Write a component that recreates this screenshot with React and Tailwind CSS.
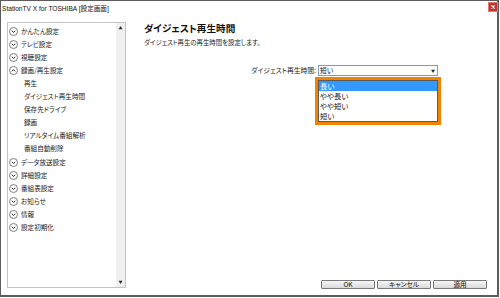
import React from "react";

const jp = "font-['Noto_Sans_CJK_JP','Noto_Sans',sans-serif] [font-feature-settings:'palt']";

function Chevron({ up }) {
    return (
        <svg width="9" height="9" viewBox="0 0 9 9" className="shrink-0">
            <circle cx="4.5" cy="4.5" r="4" fill="white" stroke="#6e6e6e" strokeWidth="0.9" />
            {up ? (
                <path d="M2.8 5.3 L4.5 3.6 L6.2 5.3" fill="none" stroke="#222" strokeWidth="1" />
            ) : (
                <path d="M2.8 3.8 L4.5 5.5 L6.2 3.8" fill="none" stroke="#222" strokeWidth="1" />
            )}
        </svg>
    );
}

const tree = [
    { label: "かんたん設定" },
    { label: "テレビ設定" },
    { label: "視聴設定" },
    { label: "録画/再生設定", open: true },
    { label: "再生", sub: true },
    { label: "ダイジェスト再生時間", sub: true },
    { label: "保存先ドライブ", sub: true },
    { label: "録画", sub: true },
    { label: "リアルタイム番組解析", sub: true },
    { label: "番組自動削除", sub: true },
    { label: "データ放送設定" },
    { label: "詳細設定" },
    { label: "番組表設定" },
    { label: "お知らせ" },
    { label: "情報" },
    { label: "設定初期化" },
];

const options = ["長い", "やや長い", "やや短い", "短い"];

export default function App() {
    return (
        <div className="w-[500px] h-[298px] bg-white overflow-hidden">
            <div className="relative w-[499px] h-[297px] border-t border-l border-r-2 border-b-2 border-[#5c5c5c] flex flex-col">
                {/* title bar */}
                <div className="h-[21px] shrink-0 relative">
                    <div className="pl-[1px] h-[15px] flex items-center text-[6.6px] text-[#111] font-['Liberation_Sans','Noto_Sans_CJK_JP',sans-serif]">
                        StationTV X for TOSHIBA [設定画面]
                    </div>
                    <div className="absolute left-[487px] top-[1px] w-[10px] h-[10px] bg-[#c4322c] border border-[#e07a74] flex items-center justify-center">
                        <svg width="4" height="4" viewBox="0 0 4 4">
                            <path d="M0.3 0.3 L3.7 3.7 M3.7 0.3 L0.3 3.7" stroke="white" strokeWidth="1.1" />
                        </svg>
                    </div>
                </div>

                <div className="flex-1 flex">
                    {/* left tree */}
                    <div className={`ml-[6px] w-[119px] h-[266px] border border-[#c4c4c4] flex ${jp}`}>
                        <div className="flex-1 pt-[2px]">
                            {tree.map((t) => (
                                <div
                                    key={t.label}
                                    className={`h-[13.1px] flex items-center text-[6.6px] text-[#1a1a1a] ${t.sub ? "pl-[16px]" : "pl-[1px] gap-[3px]"}`}
                                >
                                    {!t.sub && <Chevron up={t.open} />}
                                    <span>{t.label}</span>
                                </div>
                            ))}
                        </div>
                        <div className="w-[9px] bg-[#f0f0f0] flex flex-col justify-between items-center py-[3px]">
                            <span className="text-[4px] leading-[4px] text-[#222]">▲</span>
                            <span className="text-[4px] leading-[4px] text-[#222]">▼</span>
                        </div>
                    </div>

                    {/* right content */}
                    <div className={`flex-1 flex flex-col pl-[18px] ${jp}`}>
                        <div className="h-[12px] leading-[12px] text-[9.6px] font-bold text-[#111]">
                            ダイジェスト再生時間
                        </div>
                        <div className="mt-[5px] h-[8px] leading-[8px] text-[6.4px] text-[#222]">
                            ダイジェスト再生の再生時間を設定します。
                        </div>

                        <div className="mt-[18px] mr-[59px] flex justify-end items-center gap-[2px]">
                            <span className="text-[6.8px] text-[#222]">ダイジェスト再生時間:</span>
                            <div className="relative w-[120px] h-[11px] border border-[#7d9bbf] bg-white flex items-center">
                                <span className="pl-[1px] text-[6.8px] leading-[9px] text-[#111]">短い</span>
                                <span className="ml-auto mr-[2px] text-[4px] leading-[4px] text-[#222]">▼</span>
                                <div className="absolute left-[-4px] top-[11px] w-[126px] border-[3px] border-[#f08300] bg-white">
                                    <div className="border border-[#5a5a5a] bg-white">
                                        {options.map((o, i) => (
                                            <div
                                                key={o}
                                                className={`h-[10px] leading-[10px] pl-[1px] text-[7.4px] ${i === 0 ? "bg-[#3399ff] text-white" : "text-[#111]"}`}
                                            >
                                                {o}
                                            </div>
                                        ))}
                                    </div>
                                </div>
                            </div>
                        </div>

                        <div className="mt-auto mb-[6px] mr-[10px] flex justify-end gap-[2px]">
                            {["OK", "キャンセル", "適用"].map((b) => (
                                <div
                                    key={b}
                                    className="w-[54px] h-[9px] border border-[#7a7a7a] rounded-[1px] bg-gradient-to-b from-[#f6f6f6] to-[#dadada] flex items-center justify-center text-[6.6px] text-[#111]"
                                >
                                    {b}
                                </div>
                            ))}
                        </div>
                    </div>
                </div>
            </div>
        </div>
    );
}
